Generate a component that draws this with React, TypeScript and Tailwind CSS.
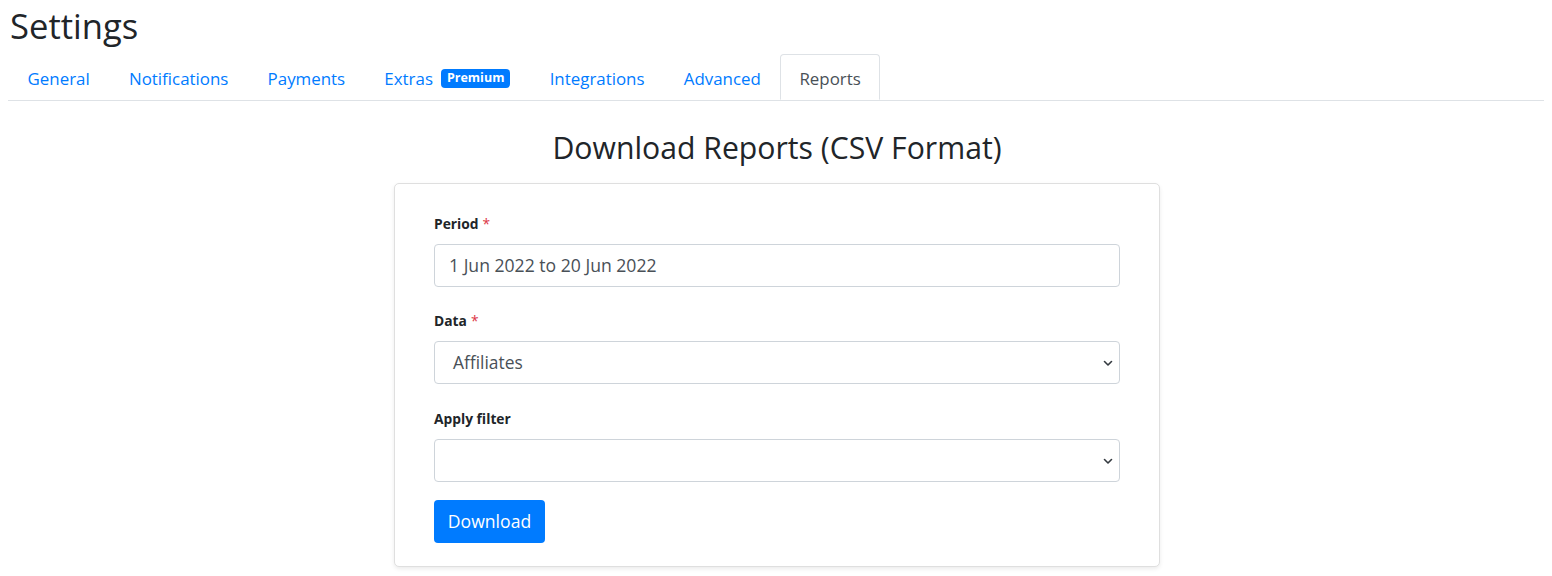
import React from 'react';

const tabs = [
  { label: 'General' },
  { label: 'Notifications' },
  { label: 'Payments' },
  { label: 'Extras', badge: 'Premium' },
  { label: 'Integrations' },
  { label: 'Advanced' },
  { label: 'Reports', active: true },
];

function Chevron() {
  return (
    <svg width="10" height="8" viewBox="0 0 10 8" className="absolute right-[6px] top-1/2 -translate-y-1/2">
      <path d="M1.5 2.5 5 6 8.5 2.5" fill="none" stroke="#343a40" strokeWidth="1.6" strokeLinecap="round" strokeLinejoin="round" />
    </svg>
  );
}

function Label({ text, required }: { text: string; required?: boolean }) {
  return (
    <label className="block text-[13.8px] leading-[20px] font-bold text-[#212529] mb-[10px]">
      {text}
      {required && <span className="text-[#dc3545] font-normal ml-[4px]">*</span>}
    </label>
  );
}

export default function App() {
  return (
    <div className="min-h-screen bg-white px-[8px] text-[#212529]" style={{ fontFamily: '"Open Sans", "Noto Sans", sans-serif' }}>
      <h1 className="pl-[2px] pt-[2px] text-[34.6px] leading-[48px] font-normal">Settings</h1>

      <nav className="mt-[4px] flex border-b border-[#dee2e6]">
        {tabs.map((t) => (
          <div
            key={t.label}
            className={
              t.active
                ? 'flex items-center h-[46px] pt-[3px] px-[18px] -mb-px border border-[#dee2e6] border-b-white rounded-t-[4px] bg-white text-[#495057] text-[16.9px]'
                : 'flex items-center h-[46px] pt-[3px] px-[18.6px] border border-transparent text-[#007bff] text-[16.9px]'
            }
          >
            {t.label}
            {t.badge && (
              <span className="ml-[8px] inline-flex items-center h-[19px] px-[6px] rounded-[4px] bg-[#007bff] text-white text-[12.5px] font-bold leading-none">
                {t.badge}
              </span>
            )}
          </div>
        ))}
      </nav>

      <div className="pl-[2px]">
        <h2 className="mt-[28px] text-center text-[30.2px] leading-[37px] font-normal">Download Reports (CSV Format)</h2>

        <div className="mx-auto mt-[17px] w-[766px] rounded-[5px] border border-[#dfdfdf] bg-white shadow-[0_2px_4px_rgba(0,0,0,0.08)] px-[39px] pt-[30px] pb-[23px]">
          <div className="mb-[24px]">
            <Label text="Period" required />
            <div className="flex items-center h-[43px] rounded-[4px] border border-[#ced4da] px-[14px] text-[17.6px] text-[#495057]">
              1 Jun 2022 to 20 Jun 2022
            </div>
          </div>

          <div className="mb-[25px]">
            <Label text="Data" required />
            <div className="relative flex items-center h-[43px] rounded-[4px] border border-[#ced4da] px-[18px] text-[17.4px] text-[#495057]">
              Affiliates
              <Chevron />
            </div>
          </div>

          <div className="mb-[18px]">
            <Label text="Apply filter" />
            <div className="relative h-[43px] rounded-[4px] border border-[#ced4da]">
              <Chevron />
            </div>
          </div>

          <button className="h-[43px] w-[111px] rounded-[4px] bg-[#007bff] text-white text-[17.6px]">Download</button>
        </div>
      </div>
    </div>
  );
}
